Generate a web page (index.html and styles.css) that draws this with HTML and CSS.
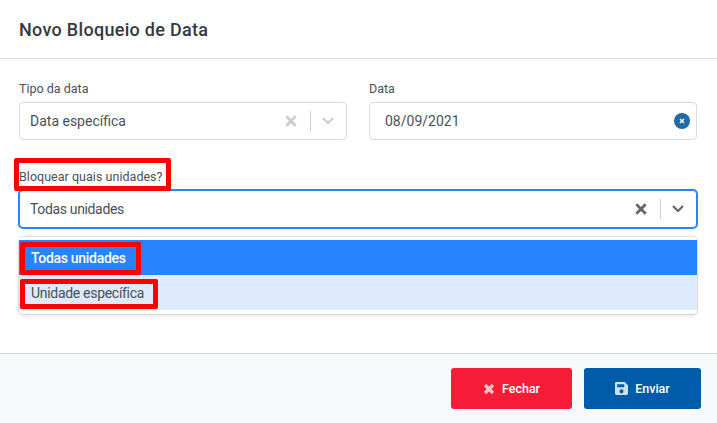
FILE: index.html
```html
<!DOCTYPE html>
<html lang="pt">
<head>
<meta charset="utf-8">
<title>Novo Bloqueio de Data</title>
<link rel="stylesheet" href="styles.css">
</head>
<body>
<div class="modal">
  <header class="modal-header"><h1 class="modal-title">Novo Bloqueio de Data</h1></header>
  <main class="modal-body">
    <div class="row">
      <div class="field">
        <label class="label">Tipo da data</label>
        <div class="control">
          <span class="value">Data específica</span>
          <span class="indicators">
            <svg class="ic-x" viewBox="0 0 12 12"><path d="M2 2l8 8M10 2l-8 8"/></svg>
            <span class="sep"></span>
            <svg class="ic-chev" viewBox="0 0 14 10"><path d="M2 2l5 5 5-5"/></svg>
          </span>
        </div>
      </div>
      <div class="field">
        <label class="label">Data</label>
        <div class="control date">
          <span class="value">08/09/2021</span>
          <span class="clear"><svg viewBox="0 0 6 6"><path d="M1 1l4 4M5 1l-4 4"/></svg></span>
        </div>
      </div>
    </div>
    <div class="unit-field">
      <label class="label unit-label"><span class="mark mark-label">Bloquear quais unidades?</span></label>
      <div class="control focused">
        <span class="value tight">Todas unidades</span>
        <span class="indicators dark">
          <svg class="ic-x" viewBox="0 0 12 12"><path d="M2 2l8 8M10 2l-8 8"/></svg>
          <span class="sep"></span>
          <svg class="ic-chev" viewBox="0 0 14 10"><path d="M2 2l5 5 5-5"/></svg>
        </span>
      </div>
      <div class="menu">
        <div class="option selected"><span class="mark mark-first">Todas unidades</span></div>
        <div class="option hover"><span class="mark mark-second">Unidade específica</span></div>
      </div>
    </div>
  </main>
  <footer class="modal-footer">
    <button class="btn btn-close">
      <svg class="btn-ic" viewBox="0 0 12 12"><path class="x" d="M2 2l8 8M10 2l-8 8"/></svg>Fechar
    </button>
    <button class="btn btn-send">
      <svg class="btn-ic btn-ic-save" viewBox="0 0 12 12"><path d="M1.300 0h7.600L12 3v7.700c0 .7-.6 1.300-1.300 1.300H1.300C.6 12 0 11.400 0 10.700V1.300C0 .6.600 0 1.300 0zM2 2v2.800h6.500V2zM6 6.700a1.900 1.900 0 1 0 0 3.800 1.900 1.900 0 0 0 0-3.800z" fill-rule="evenodd"/></svg>Enviar
    </button>
  </footer>
</div>
</body>
</html>
```
FILE: styles.css
```css
* { box-sizing: border-box; }
html, body { margin: 0; padding: 0; background: #fff; }
body { width: 717px; height: 423px; overflow: hidden; font-family: Roboto, "Noto Sans", sans-serif; color: #495057; }
.modal { height: 423px; display: flex; flex-direction: column; }
.modal-header { height: 59px; padding: 0 19px; display: flex; align-items: center; border-bottom: 1px solid #dcdde0; }
.modal-title { margin: 0; font-size: 18px; font-weight: 500; color: #343a40; letter-spacing: 0.3px; }
.modal-body { flex: 1; padding: 22px 20px 0 19px; }
.row { display: flex; gap: 22px; }
.field { flex: 1; }
.label { display: block; height: 21px; font-size: 12.500px; line-height: 15px; color: #495057; }
.control { height: 38px; border: 1px solid #d8dadd; border-radius: 4px; display: flex; align-items: center; justify-content: space-between; padding: 0 11px 0 10px; font-size: 14px; color: #495057; background: #fff; }
.date { padding: 0 6px 0 15px; }
.tight { letter-spacing: -0.35px; }
.indicators { display: flex; align-items: center; color: #ccc; }
.ic-x { width: 14px; height: 14px; fill: none; stroke: currentColor; stroke-width: 2.400; }
.sep { width: 1px; height: 20px; background: #ccc; margin: 0 10px 0 12px; }
.ic-chev { width: 14px; height: 10px; fill: none; stroke: currentColor; stroke-width: 2.200; }
.clear { width: 16px; height: 16px; border-radius: 50%; background: #1b6ca8; display: flex; align-items: center; justify-content: center; }
.clear svg { width: 6px; height: 6px; fill: none; stroke: #fff; stroke-width: 1.500; }
.unit-field { margin-top: 29px; }
.unit-label { height: 21px; letter-spacing: 0.03px; }
.mark { position: relative; z-index: 1; }
.mark::after { content: ""; position: absolute; border: 5px solid #f00; border-radius: 2px; }
.mark-label::after { left: -5px; right: -8px; top: -11px; bottom: -7px; }
.focused { border: 1px solid #2684ff; box-shadow: 0 0 0 1px #2684ff; border-radius: 4px; }
.dark { color: #666; }
.menu { margin-top: 9px; height: 77px; border-radius: 4px; padding: 3px 0; box-shadow: 0 0 0 1px rgba(0,0,0,.1), 0 2px 4px rgba(0,0,0,.1); background: #fff; }
.option { height: 35px; padding: 0 12px; display: flex; align-items: center; font-size: 14px; letter-spacing: -0.3px; }
.selected { background: #2684ff; color: #fff; font-weight: 500; }
.hover { background: #deebff; color: #495057; }
.mark-first::after { left: -11px; right: -15px; top: -8px; bottom: -9px; }
.mark-second::after { left: -11px; right: -14px; top: -6px; bottom: -8px; }
.modal-footer { height: 70px; border-top: 1px solid #d5d7da; background: #f8f9fb; display: flex; justify-content: flex-end; align-items: flex-start; gap: 12px; padding: 14px 16px 0 0; }
.btn { height: 41px; border: 0; border-radius: 3px; color: #fff; font-family: Roboto, sans-serif; font-size: 12.500px; font-weight: 500; display: flex; align-items: center; justify-content: center; gap: 7px; padding: 0; }
.btn-close { width: 121px; background: #f61c38; }
.btn-send { width: 117px; background: #005cab; }
.btn-ic { width: 12px; height: 12px; }
.btn-ic-save { width: 13px; height: 13px; fill: #cfe0f0; }
.x { fill: none; stroke: #ffc5cd; stroke-width: 3.200; }
```
